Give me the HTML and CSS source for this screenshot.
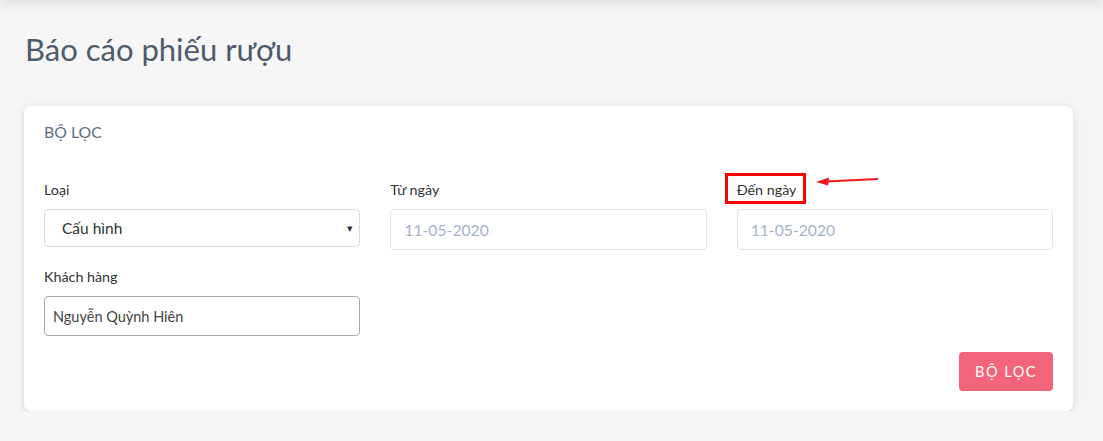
FILE: index.html
```html
<!DOCTYPE html>
<html>
<head>
<meta charset="UTF-8">
<title>Báo cáo phiếu rượu</title>
<link rel="stylesheet" href="styles.css">
</head>
<body>
  <div class="topbar"></div>
  <div class="page">
    <h1 class="title">Báo cáo phiếu rượu</h1>

    <div class="card">
      <div class="card-head">BỘ LỌC</div>

      <div class="filters">
        <div class="field">
          <label>Loại</label>
          <div class="select">
            <span>Cấu hình</span>
            <span class="caret">&#9662;</span>
          </div>
        </div>
        <div class="field">
          <label>Từ ngày</label>
          <input class="date" type="text" placeholder="11-05-2020">
        </div>
        <div class="field mark-wrap">
          <label class="marked">Đến ngày</label>
          <input class="date" type="text" placeholder="11-05-2020">
          <div class="mark-box"></div>
          <svg class="mark-arrow" width="64" height="12" viewBox="0 0 64 12">
            <line x1="62" y1="4" x2="10" y2="6.5" stroke="#f01818" stroke-width="2.2"/>
            <polygon points="0,7 13,2.5 12,10.5" fill="#f01818"/>
          </svg>
        </div>
        <div class="field">
          <label>Khách hàng</label>
          <input class="text" type="text" value="Nguyễn Quỳnh Hiên">
        </div>
      </div>

      <div class="actions">
        <button class="btn">BỘ LỌC</button>
      </div>
    </div>
  </div>
</body>
</html>
```

FILE: styles.css
```css
body{
  margin: 0;
  background-color: #f6f6f6;
  font-family: "Lato", "Open Sans", sans-serif;
  color: #333;
}
.topbar{
  height: 0;
  box-shadow: 0 0 12px 3px rgba(0, 0, 0, 0.16);
}
.page{
  padding: 0 30px 0 24px;
}
.title{
  margin: 0;
  padding: 30px 0 0 1px;
  height: 106px;
  box-sizing: border-box;
  font-size: 31px;
  font-weight: 400;
  color: #4d5b6c;
}
.card{
  background-color: #fff;
  border-radius: 7px;
  box-shadow: 0 2px 8px rgba(0, 0, 0, 0.12);
  padding: 16px 20px 20px 20px;
}
.card-head{
  font-size: 15.8px;
  color: #5e6e80;
  height: 59px;
}
.filters{
  display: grid;
  grid-template-columns: repeat(3, 1fr);
  column-gap: 30px;
  row-gap: 18px;
}
.field label{
  display: block;
  font-size: 14.3px;
  color: #333;
  height: 19px;
  margin-bottom: 9px;
}
.select{
  height: 38px;
  box-sizing: border-box;
  border: 1px solid #d4dbe6;
  border-radius: 4px;
  display: flex;
  align-items: center;
  justify-content: space-between;
  padding: 0 6px 0 17px;
  font-size: 15.5px;
  color: #333;
}
.caret{
  font-size: 11px;
  color: #333;
}
.date{
  width: 100%;
  height: 41px;
  box-sizing: border-box;
  border: 1px solid #dfe5ee;
  border-radius: 4px;
  padding: 0 13px;
  font-family: inherit;
  font-size: 15.7px;
  outline: none;
}
.date::placeholder{
  color: #a6b3c9;
}
.text{
  width: 100%;
  height: 40px;
  box-sizing: border-box;
  border: 1px solid #a9a9a9;
  border-radius: 4px;
  padding: 0 8px;
  font-family: inherit;
  font-size: 14.5px;
  color: #444;
  outline: none;
}
.mark-wrap{
  position: relative;
}
.mark-box{
  position: absolute;
  left: -12px;
  top: -8px;
  width: 81px;
  height: 31px;
  box-sizing: border-box;
  border: 3px solid #f00;
}
.mark-arrow{
  position: absolute;
  left: 79px;
  top: -6px;
}
.actions{
  display: flex;
  justify-content: flex-end;
  margin-top: 16px;
}
.btn{
  width: 94px;
  height: 39px;
  border: none;
  border-radius: 4px;
  background-color: #f2647a;
  color: #fff;
  font-family: inherit;
  font-size: 14.5px;
  letter-spacing: 1.5px;
}
```
